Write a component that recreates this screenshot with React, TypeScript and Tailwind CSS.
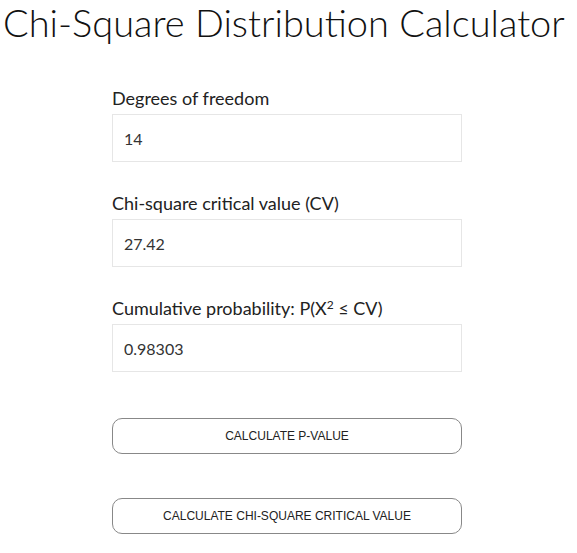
import { useState } from "react";

const FONT = "font-['Lato','Open_Sans',sans-serif]";

function Field({ label, value, onChange }: { label: React.ReactNode; value: string; onChange: (v: string) => void })
{
  return (
    <div className="mb-[29px]">
      <label className={ `block h-6 text-[18px] leading-6 text-[#222] ${ FONT }` }>{ label }</label>
      <input
        className={ `mt-1 block h-12 w-full border border-[#e6e6e6] bg-white px-[11px] text-[16px] text-[#333] outline-none ${ FONT }` }
        value={ value }
        onChange={ (e) => onChange(e.target.value) }
      />
    </div>
  );
}

export default function App()
{
  const [ df, setDf ] = useState("14");
  const [ cv, setCv ] = useState("27.42");
  const [ p, setP ] = useState("0.98303");

  return (
    <div className="min-h-[553px] bg-white">
      <h1 className={ `pl-[3px] text-left text-[38px] font-light leading-[44px] text-[#111] ${ FONT }` }>
        Chi-Square Distribution Calculator
      </h1>
      <div className="mt-[42px] ml-[112px] w-[350px]">
        <Field label="Degrees of freedom" value={ df } onChange={ setDf } />
        <Field label="Chi-square critical value (CV)" value={ cv } onChange={ setCv } />
        <Field
          label={ <>Cumulative probability: P(X<sup className="text-[12px]">2</sup> ≤ CV)</> }
          value={ p }
          onChange={ setP }
        />
        <button
          type="button"
          className="mt-[46px] block h-9 w-full rounded-[10px] border border-[#888] bg-white font-['Liberation_Sans',Arial,sans-serif] text-[12px] text-[#222]"
        >
          CALCULATE P-VALUE
        </button>
        <button
          type="button"
          className="mt-[44px] block h-9 w-full rounded-[10px] border border-[#888] bg-white font-['Liberation_Sans',Arial,sans-serif] text-[12px] text-[#222]"
        >
          CALCULATE CHI-SQUARE CRITICAL VALUE
        </button>
      </div>
    </div>
  );
}
